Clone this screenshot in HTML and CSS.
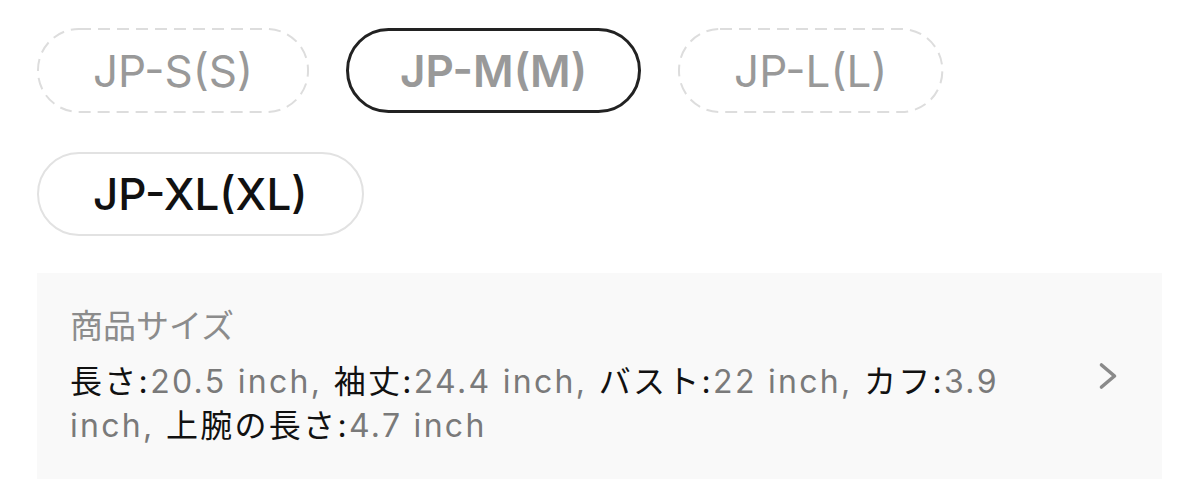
FILE: index.html
```html
<!DOCTYPE html>
<html lang="ja">
<head>
<meta charset="utf-8">
<link rel="stylesheet" href="styles.css">
</head>
<body>
<div class="page">
  <div class="chips">
    <div class="chip chip-off"><svg class="dash" aria-hidden="true"><rect/></svg>JP-S(S)</div>
    <div class="chip chip-selected">JP-M(M)</div>
    <div class="chip chip-off"><svg class="dash" aria-hidden="true"><rect/></svg>JP-L(L)</div>
    <div class="chip chip-on">JP-XL(XL)</div>
  </div>
  <div class="size-panel">
    <div class="size-text">
      <div class="size-title">商品サイズ</div>
      <div class="size-values"><span class="k">長さ:</span>20.5 inch, <span class="k">袖丈:</span>24.4 inch, <span class="k">バスト:</span>22 inch, <span class="k">カフ:</span>3.9 inch, <span class="k">上腕の長さ:</span>4.7 inch</div>
    </div>
    <svg class="chevron" width="20" height="28" viewBox="0 0 20 28"><polyline points="3.5,3 16.5,14 3.5,25" fill="none" stroke="#8a8a8a" stroke-width="3.6" stroke-linecap="round" stroke-linejoin="round"/></svg>
  </div>
</div>
</body>
</html>
```

FILE: styles.css
```css
html, body {
  margin: 0;
  padding: 0;
  background: #ffffff;
}
body {
  font-family: Inter, "Liberation Sans", "Noto Sans CJK JP", sans-serif;
}
.page {
  padding: 28px 38px 0 37px;
}
.chips {
  display: flex;
  flex-wrap: wrap;
  column-gap: 37px;
  row-gap: 39px;
}
.chip {
  box-sizing: border-box;
  height: 85px;
  padding: 0 55px;
  display: flex;
  align-items: center;
  border-radius: 43px;
  font-size: 44px;
  line-height: 1;
  white-space: nowrap;
}
.chip-off {
  position: relative;
  border: 2px solid transparent;
  color: #999999;
  padding: 0 54px;
}
.dash {
  position: absolute;
  left: -2px;
  top: -2px;
  width: calc(100% + 4px);
  height: calc(100% + 4px);
  overflow: visible;
  pointer-events: none;
}
.dash rect {
  x: 1px;
  y: 1px;
  width: calc(100% - 2px);
  height: calc(100% - 2px);
  rx: 41px;
  fill: none;
  stroke: #dddddd;
  stroke-width: 2px;
  stroke-dasharray: 12 7;
}
.chip-selected {
  border: 3px solid #222222;
  color: #999999;
  font-weight: 600;
  padding: 0 51px;
}
.chip-on {
  border: 2px solid #e2e2e2;
  color: #111111;
  font-weight: 500;
  height: 84px;
  padding: 0 54px;
}
.size-panel {
  margin-top: 37px;
  background: #f9f9f9;
  height: 206px;
  box-sizing: border-box;
  padding: 0 44px 0 33px;
  display: flex;
  align-items: center;
}
.size-text {
  flex: 1;
  margin-right: 48px;
}
.size-title {
  font-size: 33px;
  line-height: 44px;
  color: #8c8c8c;
  margin-bottom: 12px;
}
.size-values {
  font-size: 32px;
  line-height: 44px;
  letter-spacing: 2.3px;
  color: #7a7a7a;
}
.k {
  color: #111111;
}
.chevron {
  flex: none;
  display: block;
}
```
